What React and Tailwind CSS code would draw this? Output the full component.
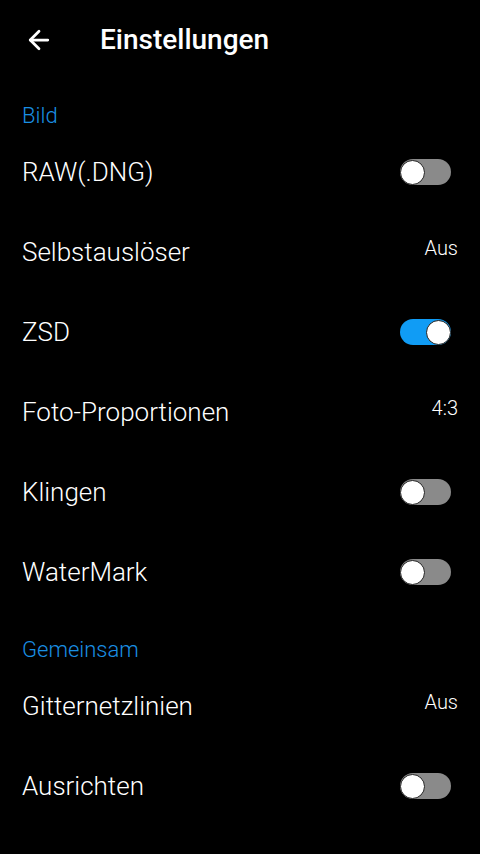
import { ArrowLeft } from 'lucide-react'

const SECTIONS = [
  {
    title: 'Bild',
    pad: 'pt-6',
    rows: [
      { label: 'RAW(.DNG)', toggle: false },
      { label: 'Selbstauslöser', value: 'Aus' },
      { label: 'ZSD', toggle: true },
      { label: 'Foto-Proportionen', value: '4:3' },
      { label: 'Klingen', toggle: false },
      { label: 'WaterMark', toggle: false },
    ],
  },
  {
    title: 'Gemeinsam',
    pad: 'pt-[26px]',
    rows: [
      { label: 'Gitternetzlinien', value: 'Aus' },
      { label: 'Ausrichten', toggle: false },
    ],
  },
]

export default function App() {
  return (
    <div className="min-h-screen bg-black text-white font-['Roboto',sans-serif]">
      {/* Title bar */}
      <header className="h-20 flex items-center">
        <div className="w-[100px] pl-[24px] flex items-center">
          <ArrowLeft size={30} strokeWidth={2.2} className="text-white" />
        </div>
        <h1 className="text-[28px] font-medium">Einstellungen</h1>
      </header>

      {SECTIONS.map((s) => (
        <section key={s.title}>
          <div className={s.pad + ' pb-1 px-[22px]'}>
            <p className="text-[22px] leading-6 font-light text-[#1a8fe3]">{s.title}</p>
          </div>
          {s.rows.map((r) => (
            <Row key={r.label} {...r} />
          ))}
        </section>
      ))}
    </div>
  )
}

function Row({ label, value, toggle }) {
  return (
    <div className="h-20 flex items-center justify-between pl-[22px] pr-[22px]">
      <span className="text-[26px] leading-7 font-light">{label}</span>
      {value !== undefined ? (
        <span className="text-[20px] mb-2 font-light">{value}</span>
      ) : (
        <Toggle on={toggle} />
      )}
    </div>
  )
}

function Toggle({ on }) {
  return (
    <div
      className={
        'mr-[7px] w-[51px] h-[26px] rounded-full flex items-center ' +
        (on ? 'bg-[#109cf5] justify-end' : 'bg-[#8a8a8a] justify-start')
      }
    >
      <div className="w-[25px] h-[25px] rounded-full bg-white border-[1.5px] border-[#222]" />
    </div>
  )
}
